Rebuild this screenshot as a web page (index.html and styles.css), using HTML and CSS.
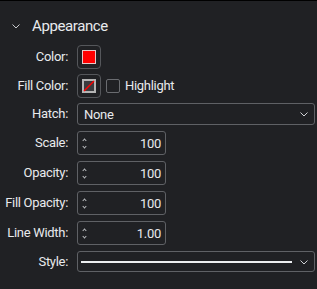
FILE: index.html
```html
<!DOCTYPE html>
<html lang="en">
<head>
  <meta charset="UTF-8">
  <meta name="viewport" content="width=device-width, initial-scale=1.0">
  <title>Appearance</title>
  <link rel="stylesheet" href="styles.css">
</head>
<body>
  <div class="panel">
    <div class="section-header">
      <svg class="section-chevron" width="8" height="5" viewBox="0 0 8 5">
        <path d="M0.5 0.5 L4 4 L7.5 0.5" fill="none" stroke="#c8cacd" stroke-width="1"/>
      </svg>
      <span class="section-title">Appearance</span>
    </div>

    <div class="props">
      <label class="prop-label">Color:</label>
      <div class="prop-value">
        <button class="color-btn" title="Color">
          <svg width="14" height="14" viewBox="0 0 14 14">
            <rect x="0.5" y="0.5" width="13" height="13" fill="#ff0000" stroke="#e6c8c8" stroke-width="1"/>
          </svg>
        </button>
      </div>

      <label class="prop-label">Fill Color:</label>
      <div class="prop-value">
        <button class="color-btn" title="Fill Color">
          <svg width="14" height="14" viewBox="0 0 14 14">
            <rect x="1" y="1" width="12" height="12" fill="#3a3b3e" stroke="#b4b4b4" stroke-width="2"/>
            <line x1="2" y1="12" x2="12" y2="2" stroke="#ff0000" stroke-width="1.4"/>
          </svg>
        </button>
        <label class="check">
          <span class="check-box"></span>
          <span>Highlight</span>
        </label>
      </div>

      <label class="prop-label">Hatch:</label>
      <div class="prop-value">
        <div class="select">
          <span class="select-text">None</span>
          <svg class="select-arrow" width="8" height="5" viewBox="0 0 8 5">
            <path d="M0.5 0.5 L4 4 L7.5 0.5" fill="none" stroke="#d0d2d5" stroke-width="1"/>
          </svg>
        </div>
      </div>

      <label class="prop-label">Scale:</label>
      <div class="prop-value">
        <div class="spin"><span class="spin-arrows"><i class="up"></i><i class="down"></i></span><span class="spin-value">100</span></div>
      </div>

      <label class="prop-label">Opacity:</label>
      <div class="prop-value">
        <div class="spin"><span class="spin-arrows"><i class="up"></i><i class="down"></i></span><span class="spin-value">100</span></div>
      </div>

      <label class="prop-label">Fill Opacity:</label>
      <div class="prop-value">
        <div class="spin"><span class="spin-arrows"><i class="up"></i><i class="down"></i></span><span class="spin-value">100</span></div>
      </div>

      <label class="prop-label">Line Width:</label>
      <div class="prop-value">
        <div class="spin"><span class="spin-arrows"><i class="up"></i><i class="down"></i></span><span class="spin-value">1.00</span></div>
      </div>

      <label class="prop-label">Style:</label>
      <div class="prop-value">
        <div class="select select-style">
          <span class="line-sample"></span>
          <svg class="select-arrow" width="8" height="5" viewBox="0 0 8 5">
            <path d="M0.5 0.5 L4 4 L7.5 0.5" fill="none" stroke="#d0d2d5" stroke-width="1"/>
          </svg>
        </div>
      </div>
    </div>
  </div>
</body>
</html>
```

FILE: styles.css
```css
html, body {
  margin: 0;
  padding: 0;
  background: #202124;
}

body {
  font-family: Roboto, "Liberation Sans", sans-serif;
  font-size: 13px;
  letter-spacing: -0.3px;
  color: #e8eaed;
}

.panel {
  border-top: 1px solid #000;
  height: 288px;
  padding-right: 2px;
}

.section-header {
  display: flex;
  align-items: center;
  height: 20px;
  margin-top: 15px;
  padding-left: 12px;
}

.section-chevron {
  margin-right: 12px;
}

.section-title {
  font-size: 15px;
  line-height: 20px;
  letter-spacing: -0.4px;
}

.props {
  display: grid;
  grid-template-columns: 68px 1fr;
  column-gap: 9px;
  row-gap: 6px;
  margin-top: 9px;
  align-items: center;
}

.prop-label {
  text-align: right;
  line-height: 16px;
}

.prop-value {
  display: flex;
  align-items: center;
  min-height: 21px;
}

.color-btn {
  width: 24px;
  height: 24px;
  padding: 0;
  border: 1px solid #55575b;
  border-radius: 4px;
  background: #202124;
  display: flex;
  align-items: center;
  justify-content: center;
}

.color-btn svg {
  display: block;
}

.props .color-btn:first-child {
  margin-bottom: -1px;
}

.check {
  display: flex;
  align-items: center;
  margin-left: 5px;
  gap: 5px;
}

.check-box {
  width: 12px;
  height: 12px;
  border: 1px solid #6a6c70;
  border-radius: 2px;
}

.select {
  flex: 1;
  height: 22px;
  box-sizing: border-box;
  border: 1px solid #5f6165;
  border-radius: 3px;
  display: flex;
  align-items: center;
  padding: 0 6px 0 6px;
}

.select-text {
  flex: 1;
}

.select-arrow {
  margin-left: auto;
  margin-top: 1px;
}

.select-style {
  height: 21px;
  padding-left: 3px;
}

.line-sample {
  flex: 1;
  height: 2px;
  background: #eceef0;
  margin-right: 8px;
}

.spin {
  width: 89px;
  height: 24px;
  box-sizing: border-box;
  border: 1px solid #5f6165;
  border-radius: 3px;
  display: flex;
  align-items: center;
  padding: 0 4px 0 4px;
}

.spin-arrows {
  display: flex;
  flex-direction: column;
  justify-content: space-between;
  height: 12px;
  width: 5px;
}

.spin-arrows i {
  display: block;
  width: 2px;
  height: 2px;
  border-left: 1px solid #b8babd;
  border-top: 1px solid #b8babd;
  margin-left: 1px;
}

.spin-arrows .up {
  transform: translateY(2px) rotate(45deg);
}

.spin-arrows .down {
  transform: translateY(-1px) rotate(225deg);
}

.spin-value {
  flex: 1;
  text-align: right;
}
```
